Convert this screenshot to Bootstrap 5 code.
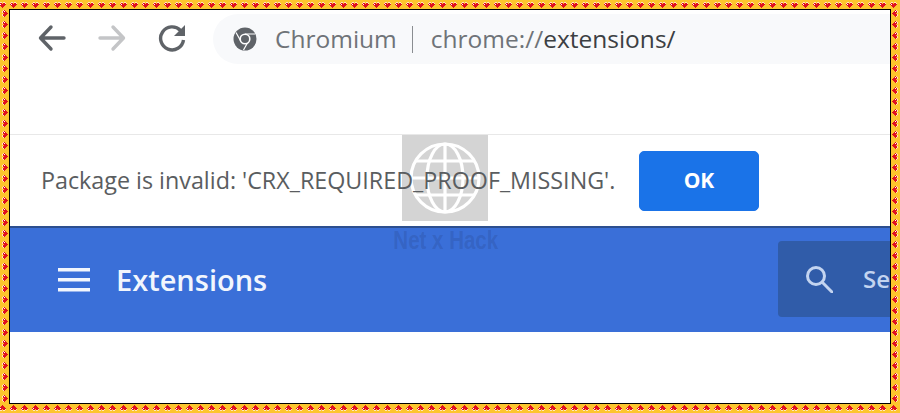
<!DOCTYPE html>
<html lang="en">
<head>
  <meta charset="UTF-8" />
  <title>Extensions</title>
  <link href="https://cdn.jsdelivr.net/npm/bootstrap@5.3.0/dist/css/bootstrap.min.css" rel="stylesheet" />
  <style>
    html, body { height: 100%; }
    body {
      margin: 0;
      overflow: hidden;
      background-color: #fdc52d;
      font-family: "Open Sans", "Noto Sans", sans-serif;
    }
    .shot-frame { width: 900px; height: 413px; }
    .strip-h, .strip-v { background-color: #fdc52d; background-repeat: repeat; flex: none; }
    .strip-h { height: 9px; background-size: 11px 9px; }
    .strip-v { width: 9px; background-size: 9px 11px; }
    .strip-top {
      background-position: 10px 0;
      background-image: url("data:image/svg+xml,%3Csvg xmlns='http://www.w3.org/2000/svg' width='11' height='9' shape-rendering='crispEdges'%3E%3Cpath d='M1 2h2v1H1zM4 2h2v1H4zM0 3h1v1H0zM6 3h1v1H6z' fill='%23ffe7b8'/%3E%3Cpath d='M1 3h2v1H1zM4 3h2v1H4zM0 4h7v1H0zM1 5h5v1H1zM2 6h3v1H2zM3 7h1v1H3z' fill='%23e01020'/%3E%3Cpath d='M1 4h1v1H1z' fill='%23fff'/%3E%3C/svg%3E");
    }
    .strip-bottom {
      background-position: 10px 0;
      background-image: url("data:image/svg+xml,%3Csvg xmlns='http://www.w3.org/2000/svg' width='11' height='9' shape-rendering='crispEdges'%3E%3Cg transform='matrix(1 0 0 -1 0 9)'%3E%3Cpath d='M1 2h2v1H1zM4 2h2v1H4zM0 3h1v1H0zM6 3h1v1H6z' fill='%23ffe7b8'/%3E%3Cpath d='M1 3h2v1H1zM4 3h2v1H4zM0 4h7v1H0zM1 5h5v1H1zM2 6h3v1H2zM3 7h1v1H3z' fill='%23e01020'/%3E%3Cpath d='M1 4h1v1H1z' fill='%23fff'/%3E%3C/g%3E%3C/svg%3E");
    }
    .strip-left {
      background-position: 0 1px;
      background-image: url("data:image/svg+xml,%3Csvg xmlns='http://www.w3.org/2000/svg' width='9' height='11' shape-rendering='crispEdges'%3E%3Cg transform='matrix(0 1 1 0 0 0)'%3E%3Cpath d='M1 2h2v1H1zM4 2h2v1H4zM0 3h1v1H0zM6 3h1v1H6z' fill='%23ffe7b8'/%3E%3Cpath d='M1 3h2v1H1zM4 3h2v1H4zM0 4h7v1H0zM1 5h5v1H1zM2 6h3v1H2zM3 7h1v1H3z' fill='%23e01020'/%3E%3Cpath d='M1 4h1v1H1z' fill='%23fff'/%3E%3C/g%3E%3C/svg%3E");
    }
    .strip-right {
      background-position: 0 1px;
      background-image: url("data:image/svg+xml,%3Csvg xmlns='http://www.w3.org/2000/svg' width='9' height='11' shape-rendering='crispEdges'%3E%3Cg transform='matrix(0 1 -1 0 9 0)'%3E%3Cpath d='M1 2h2v1H1zM4 2h2v1H4zM0 3h1v1H0zM6 3h1v1H6z' fill='%23ffe7b8'/%3E%3Cpath d='M1 3h2v1H1zM4 3h2v1H4zM0 4h7v1H0zM1 5h5v1H1zM2 6h3v1H2zM3 7h1v1H3z' fill='%23e01020'/%3E%3Cpath d='M1 4h1v1H1z' fill='%23fff'/%3E%3C/g%3E%3C/svg%3E");
    }
    .shot-inner {
      border: 1px solid #000;
      background-color: #fff;
      min-width: 0;
    }
    .tool-bar { height: 125px; border-bottom: 1px solid #e8e8e8; padding-left: 28px; }
    .tool-btn { display: block; flex: none; margin-top: 14px; }
    .omni-box {
      width: 700px;
      height: 50px;
      margin-top: 4px;
      margin-left: 27px;
      padding-left: 20px;
      background-color: #f8f9fb;
      border-radius: 25px 0 0 25px;
      font-size: 24.500px;
      white-space: nowrap;
    }
    .omni-site { color: #6f7378; margin-left: 18px; }
    .omni-sep { width: 1px; height: 27px; background-color: #8a8d91; margin: 0 18px 0 15px; }
    .omni-scheme { color: #6f7378; }
    .omni-path { color: #3c4043; }
    .msg-row { height: 91px; padding-left: 31px; }
    .msg-text {
      position: relative;
      z-index: 2;
      color: #5a5d60;
      font-size: 23.300px;
      width: 598px;
      white-space: nowrap;
    }
    .ok-btn {
      width: 120px;
      height: 60px;
      margin-top: 1px;
      background-color: #1a73e8;
      border-color: #1a73e8;
      color: #fff;
      font-size: 21px;
      font-weight: 700;
      border-radius: 5px;
    }
    .ext-bar {
      height: 106px;
      background-color: #3a6fd8;
      border-top: 2px solid #2c4f8f;
      padding-left: 48px;
    }
    .ext-title { color: #f2f6fd; font-size: 29px; font-weight: 600; margin-left: 26px; }
    .ext-search {
      width: 112px;
      height: 76px;
      margin-left: auto;
      margin-bottom: 2px;
      padding-left: 27px;
      background-color: #305ca9;
      border-radius: 4px 0 0 4px;
      color: #c3d4f0;
      font-size: 24px;
      font-weight: 600;
      white-space: nowrap;
    }
    .ext-search span { margin-left: 30px; }
    .mark-box {
      position: absolute;
      left: 392px;
      top: 125px;
      width: 86px;
      height: 86px;
      background-color: rgba(170, 170, 170, .5);
      z-index: 1;
    }
    .mark-text {
      position: absolute;
      left: 372px;
      top: 212px;
      width: 126px;
      text-align: center;
      color: rgba(38, 62, 125, .24);
      font-family: "Liberation Sans", sans-serif;
      font-size: 25px;
      font-weight: 700;
      transform: scaleX(.82);
      white-space: nowrap;
    }
  </style>
</head>
<body>
  <div class="shot-frame d-flex flex-column">
    <div class="strip-h strip-top"></div>
    <div class="d-flex flex-grow-1" style="min-height:0">
      <div class="strip-v strip-left"></div>
      <div class="shot-inner flex-grow-1 position-relative overflow-hidden">

        <div class="tool-bar d-flex align-items-start">
          <svg class="tool-btn" width="28" height="28" viewBox="0 0 28 28" fill="none" stroke="#5f6368" stroke-width="3.400" stroke-linecap="round" stroke-linejoin="round"><path d="M26 14H3M13 3 2.500 14 13 25"/></svg>
          <svg class="tool-btn" style="margin-left:32px" width="28" height="28" viewBox="0 0 28 28" fill="none" stroke="#c4c5c7" stroke-width="3.400" stroke-linecap="round" stroke-linejoin="round"><path d="M2 14h23M15 3l10.500 11L15 25"/></svg>
          <svg class="tool-btn" style="margin-left:32px" width="28" height="28" viewBox="0 0 28 28" fill="none"><path d="M22.500 6.500A11.500 11.500 0 1 0 25.500 16" stroke="#5f6368" stroke-width="3.400"/><path d="M27 1v11H16z" fill="#5f6368"/></svg>
          <div class="omni-box d-flex align-items-center">
            <svg width="24" height="24" viewBox="0 0 24 24" class="flex-shrink-0">
              <circle cx="12" cy="12" r="11.500" fill="#5f6368"/>
              <path d="M12 7h10M8 14.500 3 5.500M15.500 14 10.500 23" stroke="#fff" stroke-width="1.200" fill="none"/>
              <circle cx="12" cy="12" r="5.600" fill="#fff"/>
              <circle cx="12" cy="12" r="4" fill="#5f6368"/>
            </svg>
            <span class="omni-site">Chromium</span>
            <span class="omni-sep"></span>
            <span><span class="omni-scheme">chrome://</span><span class="omni-path">extensions/</span></span>
          </div>
        </div>

        <div class="msg-row d-flex align-items-center">
          <div class="msg-text">Package is invalid: 'CRX_REQUIRED_PROOF_MISSING'.</div>
          <button type="button" class="btn ok-btn p-0">OK</button>
        </div>

        <div class="ext-bar d-flex align-items-center">
          <svg width="32" height="24" viewBox="0 0 32 24" fill="#f2f6fd"><rect y="0" width="32" height="3.500"/><rect y="10" width="32" height="3.500"/><rect y="20" width="32" height="3.500"/></svg>
          <div class="ext-title">Extensions</div>
          <div class="ext-search d-flex align-items-center">
            <svg width="28" height="28" viewBox="0 0 28 28" fill="none" stroke="#c3d4f0" stroke-width="3" stroke-linecap="round" class="flex-shrink-0"><circle cx="11" cy="11" r="8.500"/><path d="M17.500 17.500 27 27"/></svg>
            <span>Se</span>
          </div>
        </div>

        <div class="mark-box d-flex align-items-center justify-content-center">
          <svg width="72" height="72" viewBox="0 0 72 72" fill="none" stroke="#fff" stroke-width="3.200">
            <circle cx="36" cy="36" r="34"/>
            <ellipse cx="36" cy="36" rx="18" ry="34"/>
            <path d="M36 2v68M2 36h68M6 19h60M6 53h60"/>
          </svg>
        </div>
        <div class="mark-text">Net x Hack</div>
      </div>
      <div class="strip-v strip-right"></div>
    </div>
    <div class="strip-h strip-bottom"></div>
  </div>
  <script src="https://cdn.jsdelivr.net/npm/bootstrap@5.3.0/dist/js/bootstrap.bundle.min.js"></script>
</body>
</html>
